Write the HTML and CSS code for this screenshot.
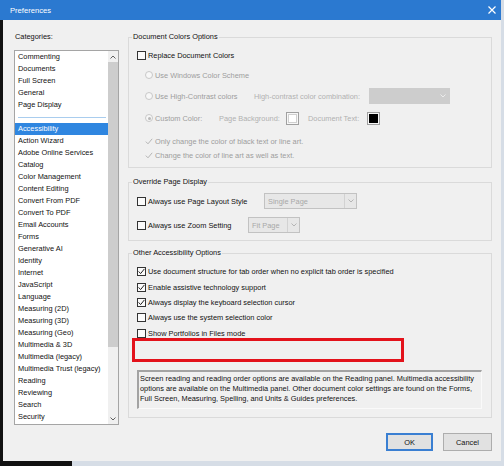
FILE: index.html
```html
<!DOCTYPE html>
<html>
<head>
<meta charset="utf-8">
<link rel="stylesheet" href="styles.css">
</head>
<body>
<div class="window">
  <div class="win-main">
    <div class="titlebar">
      <span class="title">Preferences</span>
      <svg class="close" width="8" height="8" viewBox="0 0 8 8"><path d="M0.5 0.5 L7.5 7.5 M7.5 0.5 L0.5 7.5" stroke="#fff" stroke-width="1.2" fill="none"/></svg>
    </div>
    <div class="mid">
      <div class="left-edge"></div>
      <div class="body">
        <div class="left-col">
          <div class="cat-label">Categories:</div>
          <div class="listbox">
            <div class="items">
              <div class="item">Commenting</div>
              <div class="item">Documents</div>
              <div class="item">Full Screen</div>
              <div class="item">General</div>
              <div class="item">Page Display</div>
              <div class="sep"></div>
              <div class="item sel">Accessibility</div>
              <div class="item">Action Wizard</div>
              <div class="item">Adobe Online Services</div>
              <div class="item">Catalog</div>
              <div class="item">Color Management</div>
              <div class="item">Content Editing</div>
              <div class="item">Convert From PDF</div>
              <div class="item">Convert To PDF</div>
              <div class="item">Email Accounts</div>
              <div class="item">Forms</div>
              <div class="item">Generative AI</div>
              <div class="item">Identity</div>
              <div class="item">Internet</div>
              <div class="item">JavaScript</div>
              <div class="item">Language</div>
              <div class="item">Measuring (2D)</div>
              <div class="item">Measuring (3D)</div>
              <div class="item">Measuring (Geo)</div>
              <div class="item">Multimedia &amp; 3D</div>
              <div class="item">Multimedia (legacy)</div>
              <div class="item">Multimedia Trust (legacy)</div>
              <div class="item">Reading</div>
              <div class="item">Reviewing</div>
              <div class="item">Search</div>
              <div class="item">Security</div>
            </div>
            <div class="scrollbar">
              <div class="sb-arrow"><svg width="6" height="4" viewBox="0 0 6 4"><polyline points="0.5,3.5 3,1 5.5,3.5" fill="none" stroke="#606060" stroke-width="1"/></svg></div>
              <div class="sb-thumb"></div>
              <div class="sb-track"></div>
              <div class="sb-arrow"><svg width="6" height="4" viewBox="0 0 6 4"><polyline points="0.5,0.5 3,3 5.5,0.5" fill="none" stroke="#606060" stroke-width="1"/></svg></div>
            </div>
          </div>
        </div>

        <div class="right-col">
          <fieldset class="group g1">
            <legend>Document Colors Options</legend>
            <div class="r r1">
              <span class="cb"></span><span class="txt">Replace Document Colors</span>
            </div>
            <div class="r r2 dis">
              <span class="radio"></span><span class="txt">Use Windows Color Scheme</span>
            </div>
            <div class="r r3 dis">
              <span class="opt w-hc"><span class="radio"></span><span class="txt">Use High-Contrast colors</span></span>
              <span class="lab-light w-hcc">High-contrast color combination:</span>
              <span class="dd-solid">
                <svg width="6" height="4" viewBox="0 0 6 4"><polyline points="0.5,0.5 3,3 5.5,0.5" fill="none" stroke="#ececec" stroke-width="1"/></svg>
              </span>
            </div>
            <div class="r r4 dis">
              <span class="opt w-cc"><span class="radio on"></span><span class="txt">Custom Color:</span></span>
              <span class="lab-light w-pb">Page Background:</span>
              <span class="swatch"><span class="fill white"></span></span>
              <span class="lab-light w-dt">Document Text:</span>
              <span class="swatch"><span class="fill black"></span></span>
            </div>
            <div class="r r5 dis">
              <span class="ck-dis"><svg width="8" height="7" viewBox="0 0 8 7"><polyline points="0.8,3.6 3,5.8 7.2,0.8" fill="none" stroke="#b4b4b4" stroke-width="1"/></svg></span><span class="txt">Only change the color of black text or line art.</span>
            </div>
            <div class="r r6 dis">
              <span class="ck-dis"><svg width="8" height="7" viewBox="0 0 8 7"><polyline points="0.8,3.6 3,5.8 7.2,0.8" fill="none" stroke="#b4b4b4" stroke-width="1"/></svg></span><span class="txt">Change the color of line art as well as text.</span>
            </div>
          </fieldset>

          <fieldset class="group g2">
            <legend>Override Page Display</legend>
            <div class="r rd1">
              <span class="lab w-pl"><span class="cb"></span><span class="txt">Always use Page Layout Style</span></span>
              <span class="dd w-dd1"><span class="dd-text">Single Page</span><span class="dd-btn"><svg width="6" height="4" viewBox="0 0 6 4"><polyline points="0.5,0.5 3,3 5.5,0.5" fill="none" stroke="#b5b5b5" stroke-width="1"/></svg></span></span>
            </div>
            <div class="r rd2">
              <span class="lab w-zs"><span class="cb"></span><span class="txt">Always use Zoom Setting</span></span>
              <span class="dd w-dd2"><span class="dd-text">Fit Page</span><span class="dd-btn"><svg width="6" height="4" viewBox="0 0 6 4"><polyline points="0.5,0.5 3,3 5.5,0.5" fill="none" stroke="#b5b5b5" stroke-width="1"/></svg></span></span>
            </div>
          </fieldset>

          <fieldset class="group g3">
            <legend>Other Accessibility Options</legend>
            <div class="r rc first">
              <span class="cb"><svg width="7" height="7" viewBox="0 0 7 7"><polyline points="0.6,3.4 2.6,5.6 6.4,0.9" fill="none" stroke="#222" stroke-width="1"/></svg></span><span class="txt">Use document structure for tab order when no explicit tab order is specified</span>
            </div>
            <div class="r rc tall">
              <span class="cb"><svg width="7" height="7" viewBox="0 0 7 7"><polyline points="0.6,3.4 2.6,5.6 6.4,0.9" fill="none" stroke="#222" stroke-width="1"/></svg></span><span class="txt">Enable assistive technology support</span>
            </div>
            <div class="r rc">
              <span class="cb"><svg width="7" height="7" viewBox="0 0 7 7"><polyline points="0.6,3.4 2.6,5.6 6.4,0.9" fill="none" stroke="#222" stroke-width="1"/></svg></span><span class="txt">Always display the keyboard selection cursor</span>
            </div>
            <div class="r rc">
              <span class="cb"></span><span class="txt">Always use the system selection color</span>
            </div>
            <div class="r rc tall">
              <span class="cb"></span><span class="txt">Show Portfolios in Files mode</span>
            </div>
            <div class="redbox"></div>
            <div class="info">Screen reading and reading order options are available on the Reading panel. Multimedia accessibility<br>options are available on the Multimedia panel. Other document color settings are found on the Forms,<br>Full Screen, Measuring, Spelling, and Units &amp; Guides preferences.</div>
          </fieldset>

          <div class="buttons">
            <div class="btn btn-ok">OK</div>
            <div class="btn btn-cancel">Cancel</div>
          </div>
        </div>
      </div>
    </div>
    <div class="bottom"><div class="bottom-black"></div></div>
  </div>
</div>
</body>
</html>
```
FILE: styles.css
```css
html, body {
  margin: 0;
  padding: 0;
  background: #d6dde6;
}

.window {
  width: 504px;
  height: 466px;
  display: flex;
  background: #d6dde6;
  font-family: "Liberation Sans", Arial, sans-serif;
  font-size: 7.4px;
  color: #111;
  overflow: hidden;
}

.win-main {
  width: 501px;
  display: flex;
  flex-direction: column;
}

.titlebar {
  height: 20px;
  flex-shrink: 0;
  box-sizing: border-box;
  background: #2b79d0;
  display: flex;
  align-items: center;
  justify-content: space-between;
  padding: 0 5px 0 10px;
  color: #fff;
}

.title {
  font-size: 7.6px;
}

.mid {
  flex: 1;
  display: flex;
  min-height: 0;
}

.left-edge {
  width: 3px;
  background: #111;
}

.body {
  flex: 1;
  background: #f0f0f0;
  display: flex;
  gap: 9px;
  padding: 12px 9px 0 11px;
}

.bottom {
  height: 5px;
  flex-shrink: 0;
  display: flex;
}

.bottom-black {
  width: 72px;
  background: #111;
}

/* left column */
.left-col {
  width: 105px;
  display: flex;
  flex-direction: column;
}

.cat-label {
  height: 10px;
  line-height: 10px;
  padding-left: 1px;
}

.listbox {
  margin-top: 8px;
  height: 375px;
  flex-shrink: 0;
  box-sizing: border-box;
  border: 1px solid #a5a5a5;
  background: #fff;
  display: flex;
}

.items {
  flex: 1;
  overflow: hidden;
}

.item {
  height: 12px;
  line-height: 12px;
  padding-left: 3px;
  white-space: nowrap;
}

.item.sel {
  background: #2f86e0;
  color: #fff;
}

.sep {
  height: 1px;
  margin: 6px 2px 5px 3px;
  background: #a9cdee;
}

.scrollbar {
  width: 10px;
  display: flex;
  flex-direction: column;
  background: #f0f0f0;
}

.sb-arrow {
  height: 11px;
  display: flex;
  align-items: center;
  justify-content: center;
}

.sb-thumb {
  height: 285px;
  background: #cdcdcd;
}

.sb-track {
  flex: 1;
}

/* right column */
.right-col {
  width: 364px;
  display: flex;
  flex-direction: column;
}

fieldset.group {
  margin: 0;
  padding: 0 9px 0 8px;
  border: 1px solid #dadada;
  min-width: 0;
  flex-shrink: 0;
}

fieldset.group legend {
  padding: 0 1px;
  margin-left: -5px;
  height: 10px;
  line-height: 10px;
}

fieldset.g1 { padding-bottom: 5px; }
fieldset.g2 { margin-top: 9px; padding-bottom: 7px; }
fieldset.g3 { margin-top: 7px; padding-bottom: 8px; }

.r {
  display: flex;
  align-items: center;
  height: 14px;
  white-space: nowrap;
}

.r1 { margin-top: 6px; }
.r2 { margin-top: 6px; }
.r3 { margin-top: 6px; height: 16px; }
.r4 { margin-top: 7px; }
.r5 { margin-top: 9px; }
.r6 { margin-top: 0; }

.rd1 { margin-top: 6px; height: 16px; }
.rd2 { margin-top: 8px; height: 16px; }

.rc { height: 15px; }
.rc.tall { height: 16px; }
.rc.first { margin-top: 6px; }

.dis { color: #9d9d9d; }

.cb {
  width: 9px;
  height: 9px;
  box-sizing: border-box;
  border: 1px solid #333;
  background: #fbfbfb;
  flex-shrink: 0;
  display: flex;
  align-items: center;
  justify-content: center;
  margin-right: 2px;
}

.radio {
  width: 8px;
  height: 8px;
  box-sizing: border-box;
  border: 1px solid #c8c8c8;
  border-radius: 50%;
  background: #f7f7f7;
  margin-left: 8px;
  margin-right: 2px;
  flex-shrink: 0;
  display: flex;
  align-items: center;
  justify-content: center;
}

.radio.on::after {
  content: "";
  width: 3px;
  height: 3px;
  border-radius: 50%;
  background: #b8b8b8;
}

.ck-dis {
  width: 8px;
  height: 8px;
  margin-left: 8px;
  margin-right: 2px;
  display: flex;
  align-items: center;
  justify-content: center;
  flex-shrink: 0;
}

.opt {
  display: flex;
  align-items: center;
}

.lab {
  display: flex;
  align-items: center;
}

.lab-light {
  color: #b0b0b0;
}

.w-hc { width: 117px; }
.w-hcc { width: 115px; }
.w-cc { width: 82px; }
.w-pb { width: 67px; }
.w-dt { width: 59px; margin-left: 9px; }
.w-pl { width: 127px; }
.w-zs { width: 111px; }

.dd-solid {
  width: 81px;
  height: 16px;
  background: #cdcdcd;
  display: flex;
  align-items: center;
  justify-content: flex-end;
  padding-right: 4px;
  box-sizing: border-box;
}

.swatch {
  width: 13px;
  height: 13px;
  box-sizing: border-box;
  border: 1px solid #a0a0a0;
  padding: 1px;
  background: #f7f7f7;
  display: flex;
}

.swatch .fill {
  flex: 1;
}

.fill.white { background: #fff; border: 1px solid #d0d0d0; }
.fill.black { background: #000; }

.dd {
  height: 16px;
  box-sizing: border-box;
  border: 1px solid #c2c2c2;
  background: #e7e7e7;
  display: flex;
  align-items: center;
  color: #a8a8a8;
}

.w-dd1 { width: 93px; }
.w-dd2 { width: 52px; }

.dd-text {
  flex: 1;
  padding-left: 3px;
}

.dd-btn {
  width: 12px;
  height: 100%;
  box-sizing: border-box;
  border-left: 1px solid #d2d2d2;
  display: flex;
  align-items: center;
  justify-content: center;
}

.redbox {
  margin-top: -3px;
  margin-left: -5px;
  width: 272px;
  height: 24px;
  box-sizing: border-box;
  border: 3px solid #e3121b;
}

.info {
  margin-top: 8px;
  height: 39px;
  box-sizing: border-box;
  border-top: 2px solid #a3a3a3;
  border-left: 2px solid #a3a3a3;
  border-right: 1px solid #fafafa;
  border-bottom: 1px solid #fafafa;
  padding: 2px 0 0 1px;
  line-height: 10px;
  white-space: nowrap;
  color: #111;
}

.buttons {
  display: flex;
  justify-content: flex-end;
  gap: 10px;
  margin-top: 15px;
  flex-shrink: 0;
}

.btn {
  height: 18px;
  box-sizing: border-box;
  background: #e1e1e1;
  border: 1px solid #adadad;
  display: flex;
  align-items: center;
  justify-content: center;
}

.btn-ok {
  width: 47px;
  border: 2px solid #3a7fd2;
}

.btn-cancel {
  width: 49px;
}
```
